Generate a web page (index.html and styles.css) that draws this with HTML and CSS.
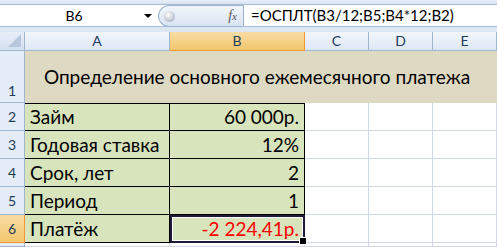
FILE: index.html
```html
<!DOCTYPE html>
<html lang="ru">
<head>
<meta charset="utf-8">
<title>ОСПЛТ</title>
<link rel="stylesheet" href="styles.css">
</head>
<body>
<div class="app">
  <div class="top-strip"></div>
  <div class="formula-bar">
    <div class="name-box">
      <span class="name">B6</span>
      <span class="drop"></span>
    </div>
    <div class="fx-button">
      <span class="knob"></span>
      <span class="fx"><i>f</i><i class="x">x</i></span>
    </div>
    <div class="formula">=ОСПЛТ(B3/12;B5;B4*12;B2)</div>
  </div>
  <div class="bar-gap"></div>
  <div class="sheet">
    <div class="corner"><span class="tri"></span></div>
    <div class="colhead">A</div>
    <div class="colhead active">B</div>
    <div class="colhead">C</div>
    <div class="colhead">D</div>
    <div class="colhead">E</div>

    <div class="rowhead tall">1</div>
    <div class="title">Определение основного ежемесячного платежа</div>

    <div class="rowhead">2</div>
    <div class="cell label first">Займ</div>
    <div class="cell value first">60 000р.</div>
    <div class="cell"></div><div class="cell"></div><div class="cell"></div>

    <div class="rowhead">3</div>
    <div class="cell label">Годовая ставка</div>
    <div class="cell value">12%</div>
    <div class="cell"></div><div class="cell"></div><div class="cell"></div>

    <div class="rowhead">4</div>
    <div class="cell label">Срок, лет</div>
    <div class="cell value">2</div>
    <div class="cell"></div><div class="cell"></div><div class="cell"></div>

    <div class="rowhead">5</div>
    <div class="cell label">Период</div>
    <div class="cell value">1</div>
    <div class="cell"></div><div class="cell"></div><div class="cell"></div>

    <div class="rowhead active">6</div>
    <div class="cell label">Платёж</div>
    <div class="cell value negative selected">-2 224,41р.</div>
    <div class="cell"></div><div class="cell"></div><div class="cell"></div>

    <div class="rowhead"></div>
    <div class="cell"></div><div class="cell"></div><div class="cell"></div><div class="cell"></div><div class="cell"></div>
  </div>
</div>
</body>
</html>
```
FILE: styles.css
```css
* { box-sizing: border-box; }

html, body {
  margin: 0;
  padding: 0;
  background: #ffffff;
  overflow: hidden;
}

.app {
  width: 497px;
  height: 247px;
  overflow: hidden;
  font-family: Lato, "Open Sans", sans-serif;
  color: #000;
}

.top-strip {
  height: 5px;
  background: linear-gradient(#e9eff8, #d6e1f0);
  border-bottom: 1px solid #a9bcd6;
}

/* formula bar */
.formula-bar {
  display: flex;
  height: 22px;
  background: #fff;
  border-bottom: 1px solid #a9bcd6;
}

.name-box {
  width: 158px;
  display: flex;
  align-items: center;
  font-size: 14px;
}

.name-box .name {
  flex: 1;
  text-align: center;
  padding-left: 4px;
}

.name-box .drop {
  width: 0;
  height: 0;
  border-left: 4px solid transparent;
  border-right: 4px solid transparent;
  border-top: 4px solid #000;
  margin-right: 6px;
}

.fx-button {
  width: 85px;
  height: 22px;
  display: flex;
  align-items: center;
  justify-content: space-between;
  border: 1px solid #9fb3ce;
  border-right: none;
  border-radius: 11px 0 0 11px;
  background: linear-gradient(#f2f6fb, #d9e3f1);
  padding: 0 6px 0 5px;
}

.fx-button .knob {
  width: 11px;
  height: 11px;
  border-radius: 50%;
  background: radial-gradient(circle at 40% 35%, #ffffff, #b5bfcb 70%, #98a3b2);
}

.fx-button .fx {
  font-family: "Liberation Serif", serif;
  font-size: 14px;
  color: #555;
}

.fx-button .fx .x {
  font-size: 11px;
}

.formula {
  flex: 1;
  border-left: 1px solid #9fb3ce;
  padding-left: 7px;
  font-size: 15px;
  line-height: 21px;
  white-space: nowrap;
}

.bar-gap {
  height: 5px;
  background: #dde7f3;
}

/* worksheet grid */
.sheet {
  display: grid;
  grid-template-columns: 25px 145px 135px 64px 64px 64px;
  grid-template-rows: 19px 52px 28px 28px 28px 28px 28px 4px;
  font-size: 19px;
}

.corner {
  background: linear-gradient(#e7eef8, #d4e0f0);
  border-right: 1px solid #9eb6ce;
  border-bottom: 1px solid #9eb6ce;
  position: relative;
}

.corner .tri {
  position: absolute;
  right: 3px;
  bottom: 3px;
  width: 0;
  height: 0;
  border-left: 13px solid transparent;
  border-bottom: 13px solid #b6c7de;
}

.colhead {
  background: linear-gradient(#f2f6fb, #dde7f4);
  border-right: 1px solid #9eb6ce;
  border-bottom: 1px solid #9eb6ce;
  text-align: center;
  font-size: 14px;
  line-height: 18px;
  color: #1f3b5a;
}

.colhead.active {
  background: linear-gradient(#f9dca6, #f2c66c);
  border-color: #f29536;
}

.rowhead {
  background: #e4ecf7;
  border-right: 1px solid #9eb6ce;
  border-bottom: 1px solid #9eb6ce;
  text-align: center;
  font-size: 14px;
  line-height: 27px;
  color: #1f3b5a;
}

.rowhead.tall {
  display: flex;
  align-items: flex-end;
  justify-content: center;
  line-height: 22px;
}

.rowhead.active {
  background: linear-gradient(#f9dca6, #f2c66c);
  border-color: #f29536;
}

.title {
  grid-column: 2 / span 5;
  background: #ddd9c3;
  text-align: center;
  line-height: 52px;
  padding-right: 8px;
  white-space: nowrap;
}

.cell {
  border-right: 1px solid #d0d7e5;
  border-bottom: 1px solid #d0d7e5;
  line-height: 27px;
  white-space: nowrap;
}

.cell.label,
.cell.value {
  background: #d8e4bc;
  border-right-color: #000;
  border-bottom-color: #000;
}

.cell.first {
  border-top: 1px solid #000;
  line-height: 26px;
}

.cell.label {
  padding-left: 5px;
}

.cell.value {
  text-align: right;
  padding-right: 5px;
}

.cell.negative {
  color: #ff0000;
}

.cell.selected {
  position: relative;
  border: 2px solid #1e1b3a;
  box-shadow: inset 0 0 0 1px #ffffff;
  line-height: 24px;
  padding-right: 4px;
}

.cell.selected::after {
  content: "";
  position: absolute;
  right: -4px;
  bottom: -4px;
  width: 6px;
  height: 6px;
  background: #000;
  border: 1px solid #fff;
}
```
